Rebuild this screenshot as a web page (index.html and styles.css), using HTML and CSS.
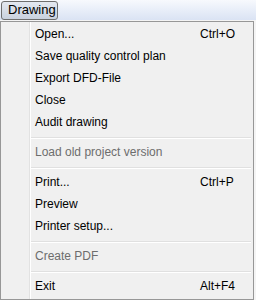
FILE: index.html
```html
<!DOCTYPE html>
<html lang="en">
<head>
    <meta charset="UTF-8">
    <title>Drawing menu</title>
    <link rel="stylesheet" href="styles.css">
</head>
<body>
    <div id="menubar">
        <span class="top-item">Drawing</span>
    </div>

    <div id="dropdown">
        <div class="item"><span class="label">Open...</span><span class="key">Ctrl+O</span></div>
        <div class="item"><span class="label">Save quality control plan</span></div>
        <div class="item"><span class="label">Export DFD-File</span></div>
        <div class="item"><span class="label">Close</span></div>
        <div class="item"><span class="label">Audit drawing</span></div>
        <div class="sep"></div>
        <div class="item disabled"><span class="label">Load old project version</span></div>
        <div class="sep"></div>
        <div class="item"><span class="label">Print...</span><span class="key">Ctrl+P</span></div>
        <div class="item"><span class="label">Preview</span></div>
        <div class="item"><span class="label">Printer setup...</span></div>
        <div class="sep"></div>
        <div class="item disabled"><span class="label">Create PDF</span></div>
        <div class="sep"></div>
        <div class="item"><span class="label">Exit</span><span class="key">Alt+F4</span></div>
    </div>
</body>
</html>
```

FILE: styles.css
```css
body {
    margin: 0;
    background-color: #f4f4f4;
    font-family: "Liberation Sans", Arial, sans-serif;
    font-size: 12px;
    color: #000;
    width: 256px;
    height: 300px;
    overflow: hidden;
}
#menubar {
    height: 20px;
    background: linear-gradient(#f7f9fd, #dae3f4);
    padding: 1px 0 0 1px;
    box-sizing: border-box;
}
.top-item {
    display: inline-block;
    box-sizing: border-box;
    width: 57px;
    height: 19px;
    line-height: 16px;
    padding-left: 6px;
    border: 1px solid #6e6e6e;
    border-radius: 3px;
    background: linear-gradient(#e3e8f0, #c9d1de);
    font-size: 13px;
}
#dropdown {
    width: 254px;
    box-sizing: border-box;
    margin-top: 1px;
    border: 1px solid #979797;
    background-color: #f0f0f0;
    padding: 1px 0 2px 0;
    background-image: linear-gradient(#e2e2e2, #e2e2e2), linear-gradient(#fff, #fff);
    background-size: 1px 100%, 1px 100%;
    background-position: 28px 0, 29px 0;
    background-repeat: no-repeat;
}
.item {
    display: flex;
    height: 22px;
    line-height: 22px;
    padding-left: 34px;
}
.label {
    flex: 1;
}
.key {
    width: 53px;
}
.disabled {
    color: #6d6d6d;
}
.sep {
    height: 8px;
    margin-left: 30px;
    margin-right: 2px;
    background-image: linear-gradient(#e0e0e0, #e0e0e0), linear-gradient(#fff, #fff);
    background-size: 100% 1px, 100% 1px;
    background-position: 0 4px, 0 5px;
    background-repeat: no-repeat;
}
```
